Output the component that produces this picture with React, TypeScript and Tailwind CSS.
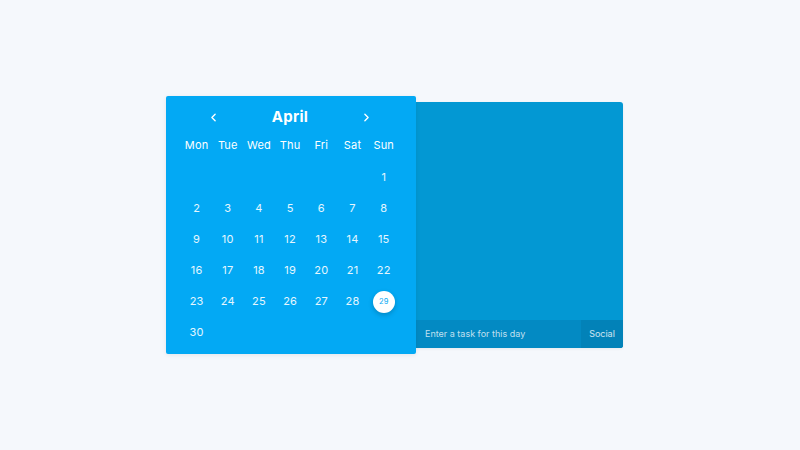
import { ChevronLeft, ChevronRight } from 'lucide-react';

const days = ['Mon', 'Tue', 'Wed', 'Thu', 'Fri', 'Sat', 'Sun'];

export default function App() {
  // April starts on Sunday: six blanks before day 1
  const cells: (number | null)[] = [...Array(6).fill(null), ...Array.from({ length: 30 }, (_, i) => i + 1)];

  return (
    <div
      className="w-[800px] h-[450px] bg-[#f5f8fc] flex items-center pl-[166px]"
      style={{ fontFamily: 'Inter, "Noto Sans", sans-serif' }}
    >
      {/* Calendar */}
      <div className="w-[250px] h-[258px] bg-[#03a9f4] pl-[15px] pt-[7px] shadow-[0_1px_4px_rgba(0,0,0,0.08)] z-10 rounded-[2px]">
        <div className="h-[27px] w-[218px] pt-[2px] flex items-center justify-between px-[26px] text-white">
          <ChevronLeft className="w-[13px] h-[13px]" strokeWidth={2.5} />
          <span className="text-[15px] font-bold tracking-[0.3px]">April</span>
          <ChevronRight className="w-[13px] h-[13px]" strokeWidth={2.5} />
        </div>
        <div className="grid grid-cols-[repeat(7,31.2px)] auto-rows-[31.2px] tracking-[0.2px]">
          {days.map(d => (
            <div key={d} className="flex items-center justify-center text-white text-[11px]">
              {d}
            </div>
          ))}
          {cells.map((n, i) => (
            <div key={i} className="flex items-center justify-center text-[11px] text-white/90">
              {n === 29 ? (
                <div className="w-[22px] h-[22px] rounded-full bg-white text-[#03a9f4] text-[7.5px] flex items-center justify-center shadow-[0_2px_5px_rgba(0,0,0,0.2)]">
                  29
                </div>
              ) : (
                n
              )}
            </div>
          ))}
        </div>
      </div>

      {/* Tasks panel */}
      <div className="w-[207px] h-[246px] bg-[#0398d3] rounded-r-[3px] flex flex-col overflow-hidden shadow-[0_1px_3px_rgba(0,0,0,0.06)]">
        <div className="flex-1" />
        <div className="h-[28px] flex bg-[#038ac3]">
          <div className="flex-1 flex items-center pl-[9px] text-[9px] text-white/75">
            Enter a task for this day
          </div>
          <div className="w-[42px] flex items-center justify-center bg-[#0282b8] text-[9px] text-white/80">
            Social
          </div>
        </div>
      </div>
    </div>
  );
}
